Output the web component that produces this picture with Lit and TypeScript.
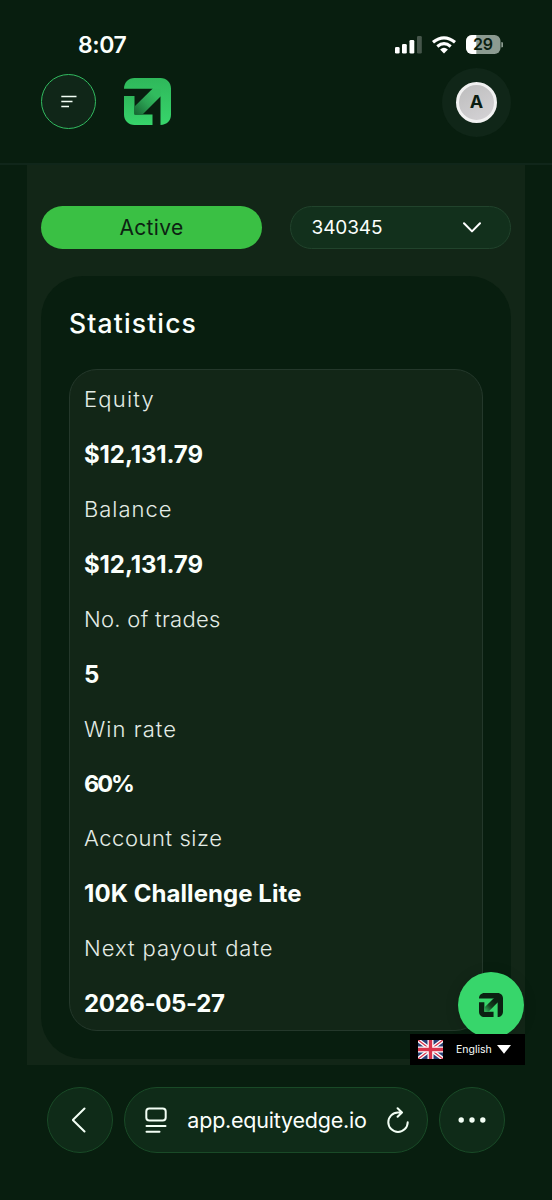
import { LitElement, html, css, svg } from "lit";
import { customElement, property } from "lit/decorators.js";

@customElement("edge-logo")
class EdgeLogo extends LitElement {
  @property() tone = "light";

  static styles = css`
    :host { display: block; }
    svg { display: block; width: 100%; height: 100%; }
  `;

  render() {
    const dark = this.tone === "dark";
    const body = dark ? "#0b2112" : "url(#body)";
    const near = dark ? "#0b2112" : "#31bb5e";
    const far = dark ? "#2fb65a" : "#176a34";
    return html`<svg viewBox="0 0 47 47">
      <defs>
        <linearGradient id="body" x1="0" y1="0" x2="0" y2="1">
          <stop offset="0" stop-color="#2fb85b"></stop>
          <stop offset="1" stop-color="#37d56b"></stop>
        </linearGradient>
        <linearGradient id="shaft" gradientUnits="userSpaceOnUse" x1="30" y1="16" x2="11" y2="35">
          <stop offset="0" stop-color=${near}></stop>
          <stop offset="0.45" stop-color=${dark ? "#14401f" : "#2ba052"}></stop>
          <stop offset="1" stop-color=${far}></stop>
        </linearGradient>
      </defs>
      ${svg`
        <path fill=${body} d="M0 10.8C0 4.5 4.5 0 10.5 0H36.5C42.5 0 47 4.5 47 10.5V36.5C47 42.5 43 46.7 36.5 47V18.5L29 11L28.5 10.8Z"/>
        <path fill=${body} d="M0 18H10.5V36.5H28.5V47H10.5C4.5 47 0 42.5 0 36.5Z"/>
        <path fill="url(#shaft)" d="M28.5 10.8H36.5V18.5L18.5 36.5H10.5V28.5Z"/>
      `}
    </svg>`;
  }
}

@customElement("app-root")
class AppRoot extends LitElement {
  private stats = [
    { label: "Equity", cls: "equity", value: "$12,131.79", vcls: "money" },
    { label: "Balance", cls: "balance", value: "$12,131.79", vcls: "money" },
    { label: "No. of trades", cls: "trades", value: "5", vcls: "" },
    { label: "Win rate", cls: "win", value: "60%", vcls: "pct" },
    { label: "Account size", cls: "size", value: "10K Challenge Lite", vcls: "plan" },
    { label: "Next payout date", cls: "payout", value: "2026-05-27", vcls: "date" },
  ];

  static styles = css`
    :host {
      display: flex; flex-direction: column; position: relative;
      width: 552px; height: 1200px; box-sizing: border-box; overflow: hidden;
      background: #081e0f; color: #fbfffc;
      font-family: Inter, "Liberation Sans", sans-serif;
    }
    * { box-sizing: border-box; }
    svg { display: block; }
    .status {
      height: 68px; padding: 22px 49px 0 78px; flex: none;
      display: flex; justify-content: space-between;
    }
    .signals { margin-top: 12px; }
    .time { height: 46px; font-size: 23px; font-weight: 600; line-height: 46px; letter-spacing: -0.4px; }
    .header {
      height: 97px; flex: none; padding: 0 41px; display: flex; align-items: flex-start;
      border-bottom: 2px solid #10261a;
    }
    .menu {
      width: 55px; height: 55px; margin-top: 6px; border: 1.5px solid #32bb60; border-radius: 50%;
      background: #102618; display: grid; place-items: center;
    }
    .logo { width: 47px; height: 47px; margin: 10px 0 0 27.5px; }
    .avatar {
      width: 69px; height: 69px; border-radius: 50%; background: #102618; margin-left: auto;
      display: grid; place-items: center;
    }
    .face {
      width: 41px; height: 41px; border: 3px solid #f1f1f1; border-radius: 50%;
      background: linear-gradient(150deg, #bdbdbd, #d5d3d6); color: #0a1c10; display: grid; place-items: center;
      font-size: 18px; font-weight: 700; line-height: 1; padding-bottom: 1px;
    }
    .main { height: 900px; flex: none; margin: 0 27.5px 0 27px; padding: 41px 14px 6px; background: #122617; }
    .filters { display: grid; grid-template-columns: 1fr 1fr; column-gap: 27.5px; height: 43px; }
    .pill { border-radius: 22px; height: 43px; }
    .active {
      background: #3ac044; color: #0c2212; text-align: center; font-size: 21px; line-height: 43px;
      letter-spacing: 0.35px;
    }
    .select {
      background: #12301c; border: 1.5px solid #21432c; display: flex; align-items: center;
      justify-content: space-between; padding: 0 29px 0 21px; font-size: 19px; letter-spacing: -0.1px;
    }
    .card { margin-top: 27px; height: 783px; border-radius: 42px; background: #081e0f; padding: 31px 28px 0; }
    .title { margin: 0; height: 62px; font-size: 26.5px; line-height: 33px; font-weight: 500; letter-spacing: 1.15px; }
    .list { height: 662px; border: 1.3px solid #24382b; border-radius: 28px; background: #122617; padding: 0 14px; margin: 0; }
    .label, .value { margin: 0; height: 54.93px; white-space: nowrap; }
    .label { font-size: 22px; line-height: 58px; font-weight: 300; color: #e4ece6; }
    .value { font-size: 24px; line-height: 60px; font-weight: 700; }
    .equity { letter-spacing: 1.2px; }
    .balance { letter-spacing: 1px; }
    .trades { letter-spacing: 0.3px; }
    .win { letter-spacing: 1.05px; }
    .size { letter-spacing: 0.55px; }
    .payout { letter-spacing: 0.97px; }
    .money { letter-spacing: -0.1px; }
    .pct { font-size: 23.5px; letter-spacing: -2px; }
    .plan { letter-spacing: 0.06px; }
    .date { letter-spacing: -0.4px; }
    .fab {
      position: absolute; left: 458px; top: 972px; width: 66px; height: 66px; border-radius: 50%;
      background: #37d66b; display: grid; place-items: center; box-shadow: 0 2px 14px rgba(0,0,0,.15);
    }
    .fab-logo { width: 24px; height: 24px; }
    .lang {
      position: absolute; left: 410px; top: 1034px; width: 114.5px; height: 31px; background: #000;
      display: flex; align-items: center; padding-left: 8px; font-size: 10.5px;
    }
    .lang-name { margin: 0 6px 0 13px; width: 35px; white-space: nowrap; }
    .browser { flex: none; display: flex; gap: 11px; padding: 22px 47px 0 46.5px; }
    .round, .address { height: 66px; border: 1.5px solid #194a27; background: #0f2b18; }
    .round { width: 66px; border-radius: 50%; display: grid; place-items: center; }
    .address { flex: 1; border-radius: 33px; display: flex; align-items: center; padding: 0 18px 0 20.5px; }
    .url { font-size: 21.5px; margin: 0 auto; letter-spacing: -0.22px; }
  `;

  render() {
    return html`
      <div class="status">
        <div class="time">8:07</div>
        <svg class="signals" width="108" height="24" viewBox="0 0 108 24">
          <g fill="#fff">
            <rect x="0" y="13" width="4.6" height="6.5" rx="1.3"/>
            <rect x="7" y="10" width="4.8" height="9.5" rx="1.3"/>
            <rect x="14.5" y="6" width="4.8" height="13.5" rx="1.3"/>
            <rect x="22" y="2" width="4.8" height="17.5" rx="1.3" opacity=".25"/>
          </g>
          <g fill="none" stroke="#fff" stroke-width="3.2">
            <path d="M38 8.3Q49 -0.6 60 8.3"/>
            <path d="M42.3 12.4Q49 7 55.7 12.4"/>
          </g>
          <path d="M45.1 15.5Q49 12.2 52.9 15.5L49 19.5Z" fill="#fff"/>
          <rect x="71" y="1" width="34.5" height="19" rx="6" fill="#8c9b91"/>
          <path d="M81.3 1H77a6 6 0 0 0-6 6v7a6 6 0 0 0 6 6h4.3z" fill="#fff"/>
          <path d="M106.3 8a2.5 2.5 0 0 1 0 5.5z" fill="#8c9b91"/>
          <text x="88" y="16.4" text-anchor="middle" font-size="16" font-weight="600" fill="#0b2112">29</text>
        </svg>
      </div>
      <header class="header">
        <div class="menu">
          <svg width="16" height="13" viewBox="0 0 16 13" fill="none" stroke="#f3fff5" stroke-width="1.7">
            <path d="M.3 1.5H15.5M.3 6.5H11.5M.3 11.5H8"/>
          </svg>
        </div>
        <edge-logo class="logo"></edge-logo>
        <div class="avatar"><div class="face">A</div></div>
      </header>
      <main class="main">
        <div class="filters">
          <div class="pill active">Active</div>
          <div class="pill select">
            <span>340345</span>
            <svg width="18" height="11" viewBox="0 0 18 11" fill="none" stroke="#fff" stroke-width="2" stroke-linecap="round" stroke-linejoin="round"><path d="M1 1.2L9 9.4L17 1.2"/></svg>
          </div>
        </div>
        <section class="card">
          <h2 class="title">Statistics</h2>
          <div class="list">
            ${this.stats.map((s) => html`
              <p class="label"><span class=${s.cls}>${s.label}</span></p>
              <p class="value"><span class=${s.vcls}>${s.value}</span></p>
            `)}
          </div>
        </section>
      </main>
      <nav class="browser">
        <div class="round">
          <svg width="16" height="26" viewBox="0 0 16 26" fill="none" stroke="#f3fff5" stroke-width="2" stroke-linecap="round" stroke-linejoin="round"><path d="M12.5 1.5L0.8 13L12.5 24.5"/></svg>
        </div>
        <div class="address">
          <svg width="22" height="26" viewBox="0 0 22 26" fill="none" stroke="#f3fff5" stroke-width="2" stroke-linecap="round">
            <rect x="1.3" y="1.5" width="19.4" height="12" rx="3"/><path d="M1.5 19H20.5M1.5 24.7H14.5"/>
          </svg>
          <span class="url">app.equityedge.io</span>
          <svg width="22" height="26" viewBox="0 0 22 26" fill="none" stroke="#f3fff5" stroke-width="2" stroke-linecap="round" stroke-linejoin="round">
            <path d="M14.5 5.5H11A9.7 9.7 0 1 0 20.7 15.2M10.6 1.2L15 5.5L10.6 9.8"/>
          </svg>
        </div>
        <div class="round">
          <svg width="28" height="6" viewBox="0 0 28 6" fill="#f3fff5"><circle cx="3.2" cy="3" r="2.7"/><circle cx="14" cy="3" r="2.7"/><circle cx="24.8" cy="3" r="2.7"/></svg>
        </div>
      </nav>
      <div class="fab"><edge-logo class="fab-logo" tone="dark"></edge-logo></div>
      <div class="lang">
        <svg width="25" height="19" viewBox="0 0 25 19">
          <rect width="25" height="19" fill="#293f75"/>
          <path d="M0 0L25 19M25 0L0 19" stroke="#fff" stroke-width="3.8"/>
          <path d="M0 0L25 19M25 0L0 19" stroke="#d8334a" stroke-width="1.3"/>
          <path d="M12.5 0V19M0 9.5H25" stroke="#fff" stroke-width="6"/>
          <path d="M12.5 0V19M0 9.5H25" stroke="#d8334a" stroke-width="3.4"/>
        </svg>
        <span class="lang-name">English</span>
        <svg width="14" height="9" viewBox="0 0 14 9"><path d="M0 0H14L7 8.7Z" fill="#fff"/></svg>
      </div>
    `;
  }
}
